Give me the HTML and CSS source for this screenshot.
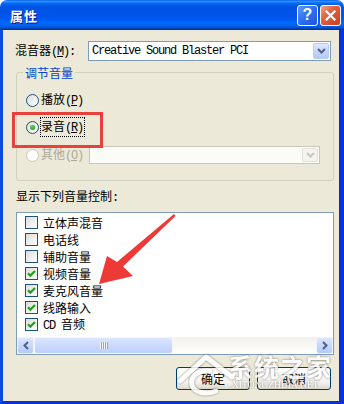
FILE: index.html
```html
<!DOCTYPE html>
<html lang="zh-CN">
<head>
<meta charset="utf-8">
<title>属性</title>
<link rel="stylesheet" href="styles.css">
</head>
<body>
<div class="window">
  <div class="titlebar">
    <span class="title">属性</span>
    <div class="tbtns">
      <div class="tbtn help">?</div>
      <div class="tbtn close"><svg width="11" height="11" viewBox="0 0 11 11"><path d="M1.5 1.5 L9.5 9.5 M9.5 1.5 L1.5 9.5" stroke="#fff" stroke-width="2.2" stroke-linecap="square"/></svg></div>
    </div>
  </div>
  <div class="frame">
    <div class="mixer-row">
      <span class="lbl">混音器<span class="lat">(<u>M</u>):</span></span>
      <div class="combo">
        <span class="combo-text lat">Creative Sound Blaster PCI</span>
        <span class="dd"><svg width="9" height="6" viewBox="0 0 9 6"><path d="M1 1 L4.5 4.5 L8 1" fill="none" stroke="#4D6185" stroke-width="2"/></svg></span>
      </div>
    </div>

    <fieldset class="group">
      <legend>调节音量</legend>
      <div class="radio-row">
        <span class="radio"></span><span class="rtext">播放<span class="lat">(<u>P</u>)</span></span>
      </div>
      <div class="radio-row r2">
        <span class="radio on"></span><span class="rtext focus">录音<span class="lat">(<u>R</u>)</span></span>
      </div>
      <div class="radio-row r3 disabled">
        <span class="radio dis"></span><span class="rtext">其他<span class="lat">(<u>O</u>)</span></span>
        <div class="combo combo-dis">
          <span class="dd dd-dis"><svg width="9" height="6" viewBox="0 0 9 6"><path d="M1 1 L4.5 4.5 L8 1" fill="none" stroke="#C9C7BA" stroke-width="2"/></svg></span>
        </div>
      </div>
    </fieldset>

    <div class="list-label">显示下列音量控制<span class="lat">:</span></div>

    <div class="listbox">
      <div class="items">
        <div class="item"><span class="cb"></span><span>立体声混音</span></div>
        <div class="item"><span class="cb"></span><span>电话线</span></div>
        <div class="item"><span class="cb"></span><span>辅助音量</span></div>
        <div class="item"><span class="cb"><svg width="11" height="11" viewBox="0 0 11 11"><path d="M2 5.2 L4.4 7.6 L9 3" fill="none" stroke="#21A121" stroke-width="2.2"/></svg></span><span>视频音量</span></div>
        <div class="item"><span class="cb"><svg width="11" height="11" viewBox="0 0 11 11"><path d="M2 5.2 L4.4 7.6 L9 3" fill="none" stroke="#21A121" stroke-width="2.2"/></svg></span><span>麦克风音量</span></div>
        <div class="item"><span class="cb"><svg width="11" height="11" viewBox="0 0 11 11"><path d="M2 5.2 L4.4 7.6 L9 3" fill="none" stroke="#21A121" stroke-width="2.2"/></svg></span><span>线路输入</span></div>
        <div class="item"><span class="cb"><svg width="11" height="11" viewBox="0 0 11 11"><path d="M2 5.2 L4.4 7.6 L9 3" fill="none" stroke="#21A121" stroke-width="2.2"/></svg></span><span><span class="lat">CD&nbsp;</span>音频</span></div>
      </div>
      <div class="hscroll">
        <span class="sbtn"><svg width="6" height="9" viewBox="0 0 6 9"><path d="M5 1 L1.5 4.5 L5 8" fill="none" stroke="#4D6185" stroke-width="2"/></svg></span>
        <div class="track"><div class="thumb"><span class="grip"></span></div></div>
        <span class="sbtn"><svg width="6" height="9" viewBox="0 0 6 9"><path d="M1 1 L4.5 4.5 L1 8" fill="none" stroke="#4D6185" stroke-width="2"/></svg></span>
      </div>
    </div>

    <div class="buttons">
      <button class="btn">确定</button>
      <button class="btn">取消</button>
    </div>
  </div>

  <div class="redbox"></div>
  <svg class="arrow" width="344" height="404" viewBox="0 0 344 404">
    <polygon points="174,214 175.5,216 123,266.5 133,276 99,284 107,256 117,262" fill="#EE3A36"/>
  </svg>

  <div class="watermark">
    <svg class="wm-logo" width="62" height="46" viewBox="0 0 62 46">
      <path d="M4 30 L30 6 L56 26" fill="none" stroke="#fff" stroke-width="5" stroke-linejoin="round" stroke-linecap="round"/>
      <path d="M34 20 C22 18 14 26 16 34 C18 42 30 44 40 40" fill="none" stroke="#fff" stroke-width="5" stroke-linecap="round"/>
    </svg>
    <div class="wm-text">
      <span class="wm-cn">系统之家</span>
      <span class="wm-en">XITONGZHIJIA.NET</span>
    </div>
  </div>
</div>
</body>
</html>
```

FILE: styles.css
```css
* { box-sizing: border-box; }
html, body { margin: 0; padding: 0; }
body {
  width: 344px;
  height: 404px;
  overflow: hidden;
  background: #fff;
  font-family: "Noto Sans CJK SC", "Noto Sans", sans-serif;
  font-size: 12px;
  color: #000;
}
.window {
  position: relative;
  width: 344px;
  height: 404px;
  display: flex;
  flex-direction: column;
}
.titlebar {
  height: 30px;
  flex: none;
  display: flex;
  align-items: center;
  justify-content: space-between;
  padding: 0 3px 0 10px;
  border-radius: 7px 7px 0 0;
  background: linear-gradient(#0058EE 0%, #3593FF 4%, #288EFF 6%, #127DFF 8%, #036FFC 10%, #0262EE 14%, #0057E5 20%, #0054E3 24%, #0055EB 56%, #005BF5 66%, #026AFE 76%, #0062EF 86%, #0052D6 92%, #0040AB 96%, #003092 100%);
}
.title {
  color: #fff;
  font-size: 13px;
  font-weight: bold;
  letter-spacing: 1px;
  line-height: 15px;
  text-shadow: 1px 1px 0 #0F1089;
}
.tbtns { display: flex; gap: 2px; }
.tbtn {
  width: 21px;
  height: 21px;
  border: 1px solid #fff;
  border-radius: 3px;
  display: flex;
  align-items: center;
  justify-content: center;
}
.help {
  background: linear-gradient(135deg, #5A9BFF 0%, #2D6FEF 50%, #1F57D8 100%);
  color: #fff;
  font: bold 16px/1 "Liberation Sans", sans-serif;
}
.close {
  background: linear-gradient(135deg, #F2A08A 0%, #E2603F 40%, #C9401C 100%);
}
.frame {
  flex: 1;
  background: #ECE9D8;
  border-left: 3px solid #0A4CDF;
  border-right: 5px solid #0831D9;
  border-bottom: 3px solid #0831D9;
  padding: 11px 5px 0 13px;
  display: flex;
  flex-direction: column;
}
.lat {
  font-family: "Liberation Mono", monospace;
  letter-spacing: -1.2px;
}
.mixer-row {
  display: flex;
  align-items: center;
  height: 20px;
  padding-right: 3px;
}
.lbl {
  width: 73px;
  margin-left: -1px;
  line-height: 16px;
  flex: none;
}
.combo {
  flex: 1;
  height: 20px;
  border: 1px solid #7F9DB9;
  background: #fff;
  display: flex;
  align-items: center;
  padding-left: 3px;
}
.combo-text { line-height: 16px; }
.dd {
  margin-left: auto;
  margin-right: 1px;
  width: 16px;
  height: 16px;
  border: 1px solid #B6CAF5;
  border-radius: 2px;
  background: linear-gradient(#E0E9FE, #C6D6FC 50%, #B4C9F6);
  display: flex;
  align-items: center;
  justify-content: center;
}
.group {
  margin: 4px 0 0 0;
  padding: 10px 0 15px 0;
  border: 1px solid #D0D0BF;
  border-radius: 3px;
  width: 318px;
  min-width: 0;
}
.group legend {
  padding: 0 2px;
  margin-left: 6px;
  line-height: 15px;
  color: #0046D5;
}
.radio-row {
  display: flex;
  align-items: center;
  height: 20px;
  padding-left: 9px;
}
.r2 { margin-top: 7px; }
.r3 { margin-top: 8px; }
.radio {
  position: relative;
  width: 13px;
  height: 13px;
  flex: none;
  border-radius: 50%;
  border: 1px solid #1C5180;
  background: linear-gradient(135deg, #DCDCD7, #fff);
  margin-right: 2px;
}
.radio.on::after {
  content: "";
  position: absolute;
  left: 3px;
  top: 3px;
  width: 5px;
  height: 5px;
  border-radius: 50%;
  background: radial-gradient(circle at 40% 40%, #62DC5E, #21A121 70%, #178117);
}
.radio.dis { border-color: #CAC8BB; background: #fff; }
.rtext { line-height: 15px; }
.focus {
  border: 1px dotted #000;
  margin-left: -1px;
  padding-right: 1px;
}
.disabled .rtext { color: #ACA899; }
.combo-dis {
  flex: none;
  width: 231px;
  height: 18px;
  margin-left: 6px;
  border-color: #C9C7BA;
  background: #FBFBF7;
}
.dd-dis {
  height: 14px;
  border-color: #E4E2D8;
  background: #F4F3EE;
}
.list-label {
  margin-top: 7px;
  line-height: 16px;
}
.listbox {
  margin-top: 6px;
  width: 318px;
  height: 143px;
  border: 1px solid #7F9DB9;
  background: #fff;
  display: flex;
  flex-direction: column;
}
.items { padding: 1px 0 4px 0; flex: 1; }
.item {
  height: 17px;
  display: flex;
  align-items: center;
  padding-left: 8px;
  line-height: 17px;
}
.cb {
  width: 13px;
  height: 13px;
  flex: none;
  border: 1px solid #1C5180;
  background: linear-gradient(135deg, #DCDCD7, #fff);
  margin-right: 5px;
  display: flex;
}
.hscroll {
  height: 17px;
  flex: none;
  display: flex;
  background: linear-gradient(#F3F1EC, #FEFEFB);
}
.sbtn {
  width: 17px;
  height: 17px;
  flex: none;
  border: 1px solid #EEF3FF;
  border-radius: 3px;
  background: linear-gradient(#DDE6FD, #C8D7FB 50%, #B6CAF5);
  display: flex;
  align-items: center;
  justify-content: center;
}
.track { flex: 1; display: flex; }
.thumb {
  width: 139px;
  border: 1px solid #F4F7FF;
  border-radius: 3px;
  background: linear-gradient(#DCE6FE, #CBD9FC 50%, #BFD0F9);
  display: flex;
  align-items: center;
  justify-content: center;
}
.grip {
  width: 8px;
  height: 7px;
  background: repeating-linear-gradient(90deg, #EEF3FF 0 1px, #8CA6E5 1px 2px);
}
.buttons {
  display: flex;
  justify-content: flex-end;
  gap: 7px;
  margin-top: 12px;
  padding-right: 3px;
}
.btn {
  width: 74px;
  height: 23px;
  padding: 0;
  font-family: "Noto Sans CJK SC", sans-serif;
  font-size: 12px;
  color: #000;
  border: 1px solid #003C74;
  border-radius: 3px;
  background: linear-gradient(#fff, #F3F2EC 70%, #DCD8CC);
}
.redbox {
  position: absolute;
  left: 12px;
  top: 112px;
  width: 91px;
  height: 36px;
  border: 3px solid #E8413C;
}
.arrow {
  position: absolute;
  left: 0;
  top: 0;
  pointer-events: none;
}
.watermark {
  position: absolute;
  left: 176px;
  top: 347px;
  display: flex;
  align-items: flex-start;
  opacity: 0.85;
  filter: drop-shadow(0 0 1px rgba(60, 60, 60, 0.7));
}
.wm-logo { margin-top: 4px; margin-right: -10px; }
.wm-text {
  display: flex;
  flex-direction: column;
  margin-top: 5px;
}
.wm-cn {
  color: #fff;
  font-size: 25px;
  font-weight: bold;
  line-height: 28px;
  letter-spacing: 1px;
}
.wm-en {
  color: #fff;
  font-family: "Liberation Serif", serif;
  font-size: 9.5px;
  line-height: 11px;
  margin-left: 4px;
}
```
